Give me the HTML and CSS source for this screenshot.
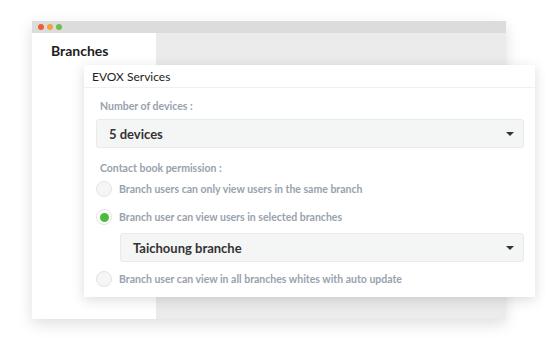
FILE: index.html
```html
<!DOCTYPE html>
<html>
<head>
<meta charset="utf-8">
<link rel="stylesheet" href="styles.css">
</head>
<body>
<div class="stage">
  <div class="window">
    <div class="titlebar">
      <span class="dot red"></span><span class="dot yellow"></span><span class="dot green"></span>
    </div>
    <div class="winbody">
      <div class="sidebar"><div class="side-title">Branches</div></div>
      <div class="content"></div>
    </div>
  </div>
  <div class="card">
    <div class="card-head">EVOX Services</div>
    <div class="card-body">
      <div class="label first">Number of devices :</div>
      <div class="select"><span>5 devices</span><span class="caret"></span></div>
      <div class="label second">Contact book permission :</div>
      <div class="radio-row r1"><span class="radio"></span><span class="rtext">Branch users can only view users in the same branch</span></div>
      <div class="radio-row r2"><span class="radio checked"></span><span class="rtext">Branch user can view users in selected branches</span></div>
      <div class="select sub"><span>Taichoung branche</span><span class="caret"></span></div>
      <div class="radio-row r3"><span class="radio"></span><span class="rtext">Branch user can view in all branches whites with auto update</span></div>
    </div>
  </div>
</div>
</body>
</html>
```
FILE: styles.css
```css
* { box-sizing: border-box; }
html, body { margin: 0; padding: 0; background: #fff; }
body { font-family: "Lato", "Open Sans", sans-serif; }
.stage { position: relative; width: 552px; height: 338px; overflow: hidden; }
.window {
  position: absolute; left: 32px; top: 21px;
  width: 474px; height: 298px;
  display: flex; flex-direction: column;
  box-shadow: 0 5px 14px rgba(0,0,0,0.13);
  background: #fff;
}
.titlebar {
  height: 12px; background: #dcdcdc;
  display: flex; align-items: center; gap: 3px; padding-left: 6px;
}
.dot { width: 6px; height: 6px; border-radius: 50%; display: block; }
.dot.red { background: #e5603b; }
.dot.yellow { background: #f0a53a; }
.dot.green { background: #6cc04a; }
.winbody { flex: 1; display: flex; }
.sidebar { width: 124px; background: #fff; padding: 9px 0 0 19px; }
.side-title { font-weight: 700; font-size: 14px; color: #1d1d1d; line-height: 18px; }
.content { flex: 1; background: #ebebeb; }
.card {
  position: absolute; left: 84px; top: 65px;
  width: 451px; height: 232px; background: #fff;
  box-shadow: 0 3px 12px rgba(0,0,0,0.14);
}
.card-head {
  height: 23px; padding-left: 8px; font-size: 12px; color: #222;
  line-height: 23px; border-bottom: 1px solid #f0f0f0;
}
.card-body { padding: 0 11px 0 12px; }
.label { font-size: 10.5px; color: #98a2ad; font-weight: 700; padding-left: 4px; line-height: 14px; }
.label.first { margin-top: 11px; }
.label.second { margin-top: 13px; }
.select {
  height: 29px; background: #f4f5f5; border: 1px solid #e9eaea; border-radius: 3px;
  display: flex; align-items: center; justify-content: space-between;
  padding: 0 9px 0 12px; font-size: 13px; font-weight: 700; color: #333;
  margin-top: 6px;
}
.select.sub { margin-left: 24px; margin-top: 2px; }
.caret { width: 0; height: 0; border-left: 4px solid transparent; border-right: 4px solid transparent; border-top: 4px solid #333; }
.radio-row { display: flex; align-items: center; height: 28px; gap: 7px; }
.radio-row.r3 { margin-top: 3px; }
.radio {
  width: 16px; height: 16px; border-radius: 50%; border: 1px solid #e3e3e3; background: #f6f6f6;
  display: flex; align-items: center; justify-content: center; flex: none;
}
.radio.checked { background: #fff; }
.radio.checked::after { content: ""; width: 9px; height: 9px; border-radius: 50%; background: #4cbb3e; }
.rtext { font-size: 10.5px; color: #98a2ad; font-weight: 700; }
```
